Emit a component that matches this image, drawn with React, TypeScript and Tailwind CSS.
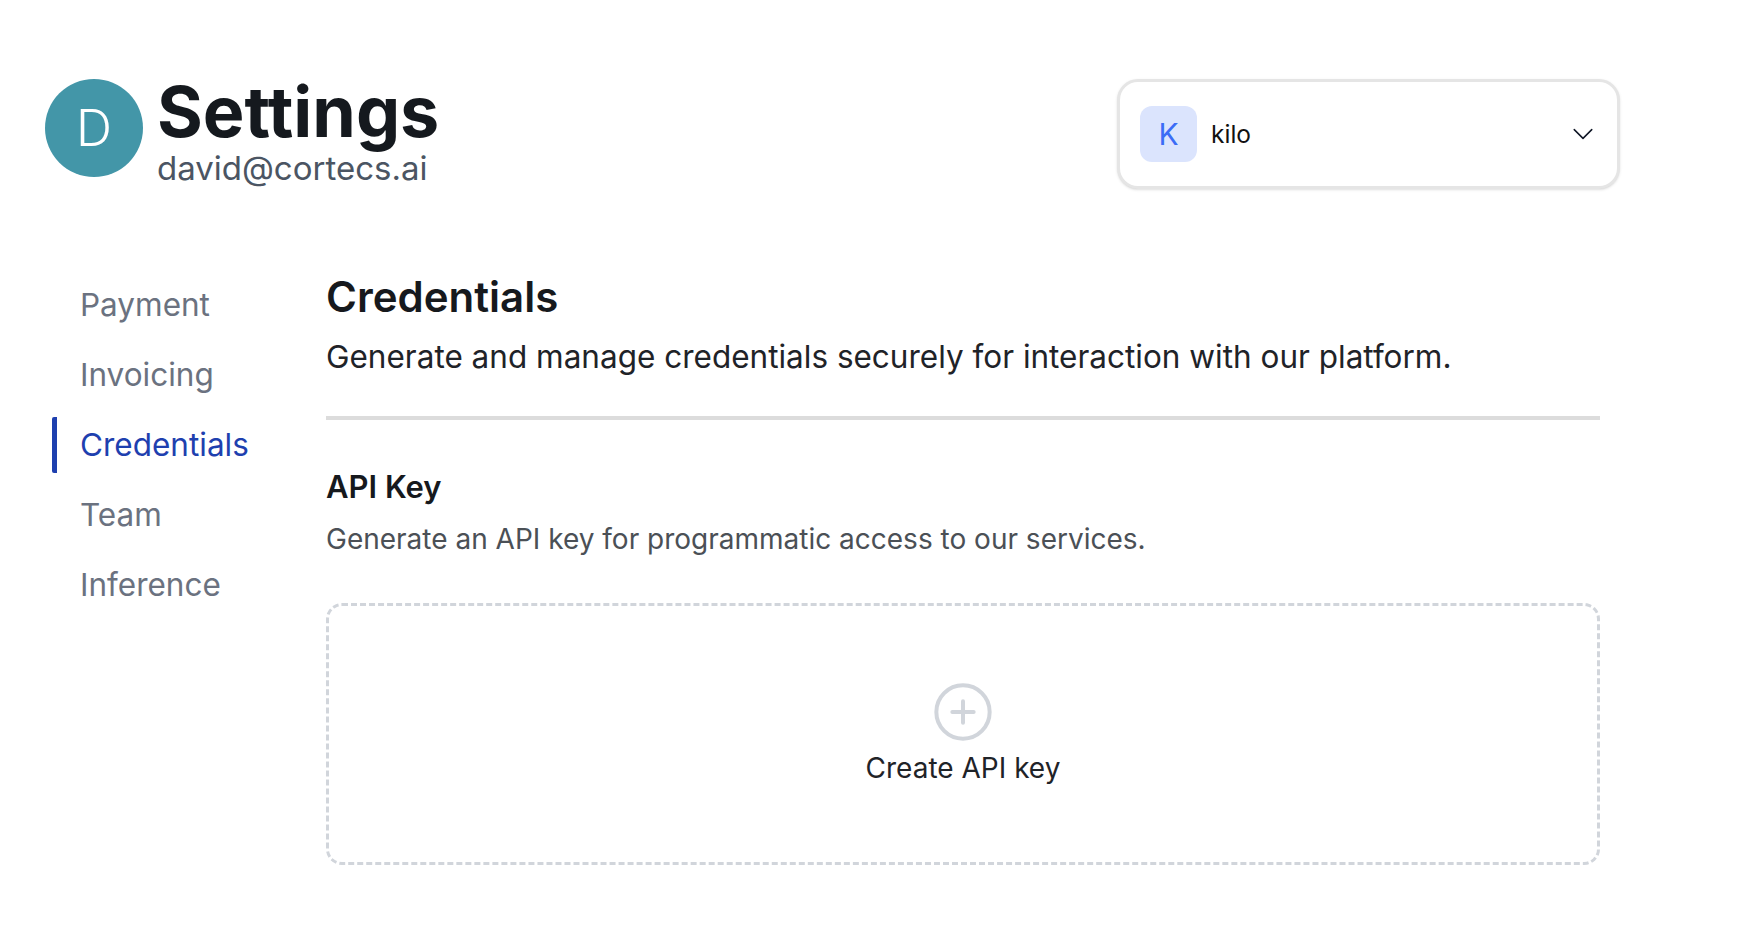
import React from "react";

const navItems = ["Payment", "Invoicing", "Credentials", "Team", "Inference"];

function CirclePlus() {
  return (
    <svg width="64" height="64" viewBox="0 0 24 24" fill="none" stroke="#d1d5db" strokeWidth="1.5" strokeLinecap="round" strokeLinejoin="round">
      <circle cx="12" cy="12" r="10" />
      <path d="M8 12h8" />
      <path d="M12 8v8" />
    </svg>
  );
}

function Chevron() {
  return (
    <svg width="28" height="28" viewBox="0 0 24 24" fill="none" stroke="#111827" strokeWidth="1.3" strokeLinecap="round" strokeLinejoin="round">
      <path d="m19.5 8.25-7.5 7.5-7.5-7.5" />
    </svg>
  );
}

export default function App() {
  return (
    <div
      className="min-h-screen bg-white pt-[79px] pl-[45px] pr-[124px]"
      style={{ fontFamily: "Inter, 'Noto Sans', sans-serif" }}
    >
      <header className="flex items-start justify-between h-[109px]">
        <div className="flex items-start gap-[14px]">
          <div className="w-[98px] h-[98px] rounded-full bg-[#4396a8] flex items-center justify-center text-white text-[50px] font-light leading-none">
            D
          </div>
          <div className="mt-[-2px] flex flex-col">
            <h1 className="text-[70px] leading-[70px] font-bold text-[#15191e]">Settings</h1>
            <p className="mt-[1px] text-[33px] leading-[40px] text-[#4b5563]">david@cortecs.ai</p>
          </div>
        </div>
        <button className="w-[503px] h-[110px] rounded-[21px] border-[3px] border-[#e5e5e5] bg-white shadow-sm flex items-center pl-[20px] pr-[20px]">
          <span className="w-[57px] h-[56px] rounded-[12px] bg-[#dbe4fd] text-[#3b6cf6] text-[30px] flex items-center justify-center">
            K
          </span>
          <span className="ml-[14px] text-[24.5px] text-[#111111]">kilo</span>
          <span className="ml-auto flex items-center">
            <Chevron />
          </span>
        </button>
      </header>

      <main className="flex mt-[89px] ml-[7px]">
        <nav className="w-[274px] shrink-0 flex flex-col gap-[14px]">
          {navItems.map((item) => {
            const active = item === "Credentials";
            return (
              <div
                key={item}
                className={
                  active
                    ? "h-[56px] flex items-center border-l-[5px] border-[#1e40af] rounded-[2px] pl-[23px] text-[31.5px] text-[#1e40af]"
                    : "h-[56px] flex items-center border-l-[5px] border-transparent pl-[23px] text-[31.5px] text-[#6b7280]"
                }
              >
                {item}
              </div>
            );
          })}
        </nav>

        <section className="w-[1274px] mt-[-5px]">
          <h2 className="text-[42px] leading-[50px] font-semibold text-[#16191d]">Credentials</h2>
          <p className="mt-[11px] text-[31.5px] leading-[47px] text-[#1f2328]">
            Generate and manage credentials securely for interaction with our platform.
          </p>
          <div className="mt-[36px] h-[4px] bg-[#dcdcdc]" />

          <h3 className="mt-[45px] text-[31px] leading-[44px] font-semibold text-[#16191d]">API Key</h3>
          <p className="mt-[9px] text-[28px] leading-[42px] text-[#4b5056]">
            Generate an API key for programmatic access to our services.
          </p>

          <div className="mt-[43px] w-[1274px] h-[262px] rounded-[16px] border-[3px] border-dashed border-[#d1d5db] flex flex-col items-center justify-center">
            <CirclePlus />
            <span className="mt-[3px] text-[28px] leading-[42px] text-[#1f2328]">Create API key</span>
          </div>
        </section>
      </main>
    </div>
  );
}
